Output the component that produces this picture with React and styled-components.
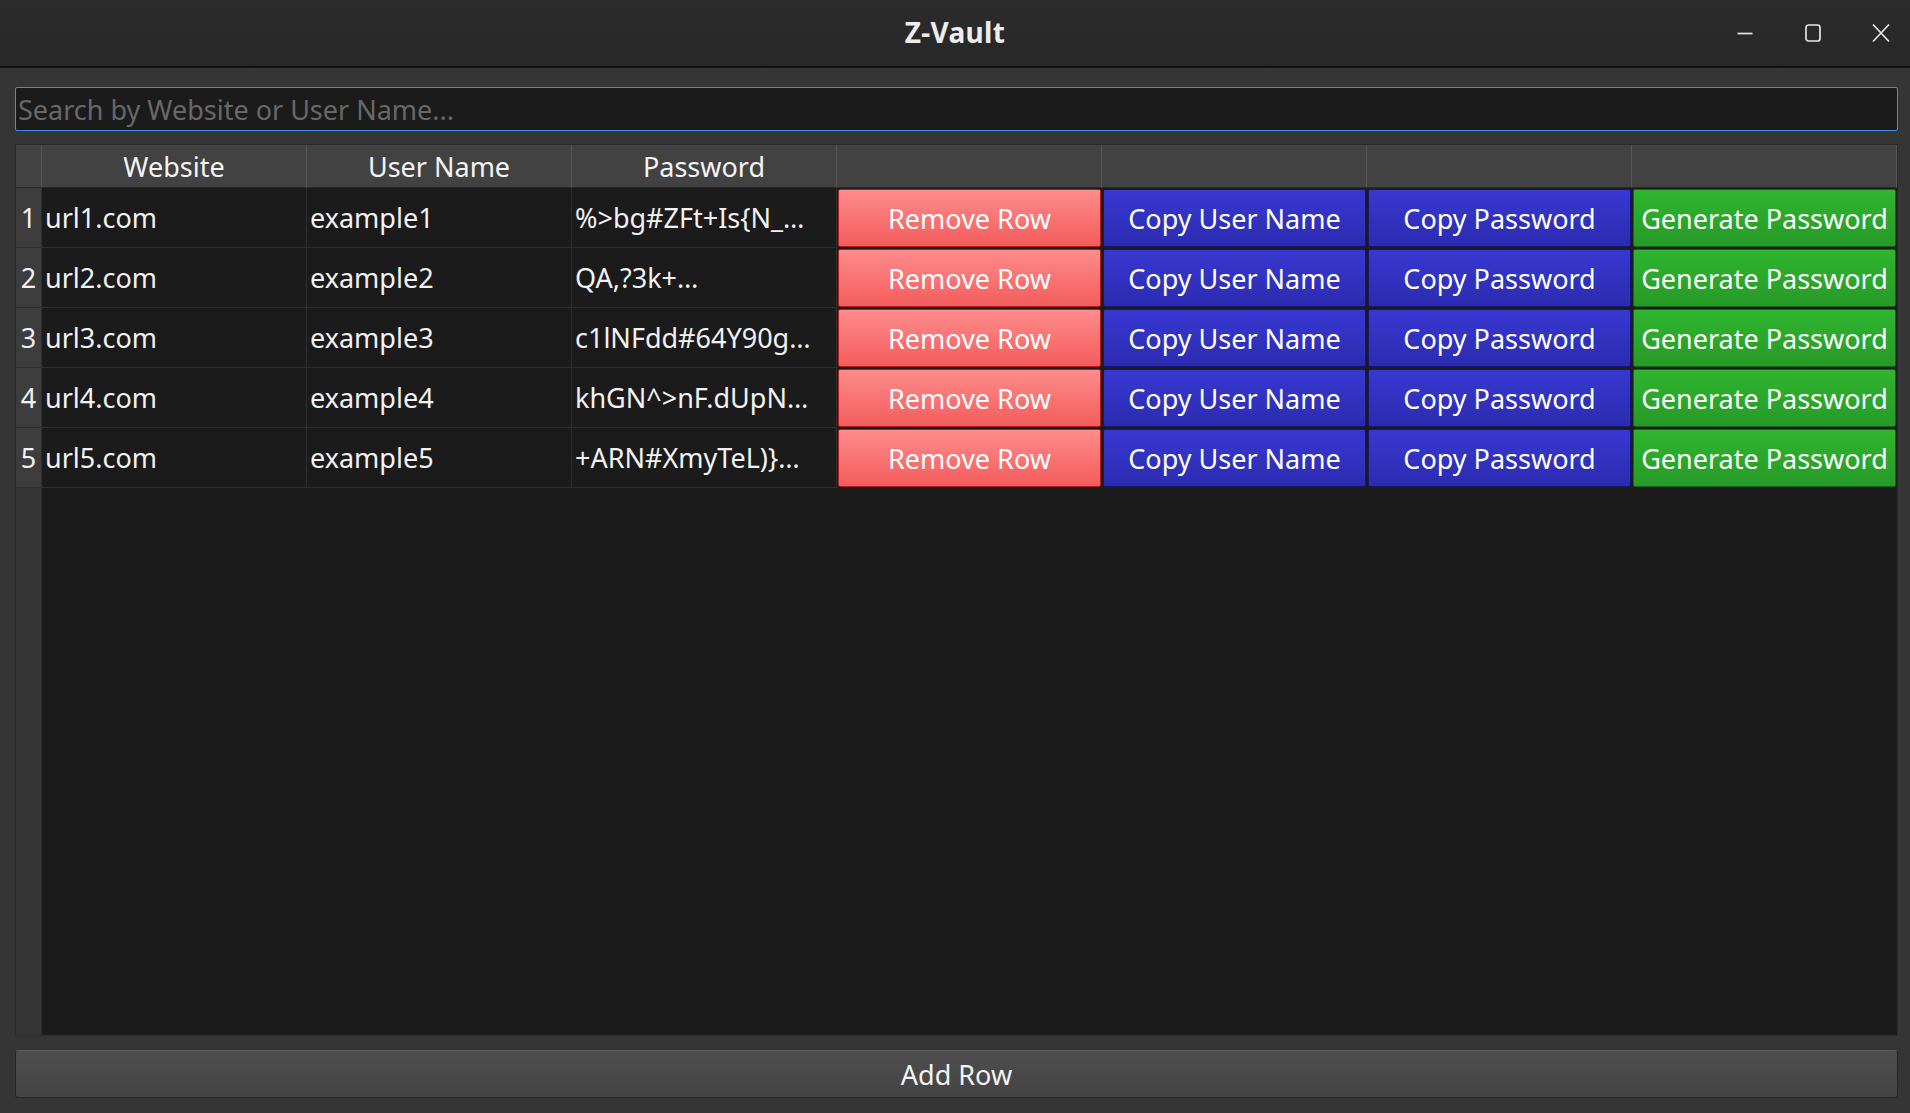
import React from 'react';
import styled, {createGlobalStyle} from 'styled-components';

const GlobalStyle = createGlobalStyle`
  html, body {
    margin: 0;
    padding: 0;
    background: #353535;
  }
  * {
    box-sizing: border-box;
  }
`

const Window = styled.div`
  width: 1910px;
  height: 1113px;
  display: flex;
  flex-direction: column;
  background: #353535;
  font-family: "Noto Sans", "Open Sans", sans-serif;
  color: #f2f2f2;
  overflow: hidden;
`
const TitleBar = styled.div`
  height: 68px;
  flex: none;
  display: grid;
  grid-template-columns: 1fr auto 1fr;
  align-items: center;
  background: linear-gradient(#2c2c2c, #272727);
  border-bottom: 2px solid #101010;
`
const Title = styled.div`
  grid-column: 2;
  font-size: 28px;
  font-weight: 700;
  color: #ededed;
  letter-spacing: 0.3px;
  padding-bottom: 2px;
`
const WinControls = styled.div`
  justify-self: end;
  display: flex;
  align-items: center;
  gap: 40px;
  padding-right: 15px;
`
const WinButton = styled.svg`
  width: 28px;
  height: 28px;
  stroke: #e6e6e6;
  stroke-width: 1.7;
  fill: none;
`
const Body = styled.div`
  flex: 1;
  display: flex;
  flex-direction: column;
  padding: 19px 12px 15px 15px;
  min-height: 0;
`
const Search = styled.input`
  height: 44px;
  flex: none;
  background: #1b1b1b;
  border: 1px solid #3d8fe0;
  border-radius: 2px;
  padding: 0 2px;
  font-family: inherit;
  font-size: 27px;
  color: #f2f2f2;
  outline: none;
  caret-color: #ffffff;
  &::placeholder {
    color: #686868;
  }
`
const Table = styled.div`
  flex: 1;
  margin-top: 13px;
  display: grid;
  grid-template-columns: 26px repeat(7, 1fr);
  grid-template-rows: 43px repeat(5, 60px) 1fr;
  background: #1b1b1b;
  border: 1px solid #2b2b2b;
  min-height: 0;
`
const HeadCell = styled.div`
  background: #424242;
  border-right: 1px solid #565656;
  border-bottom: 1px solid #2a2a2a;
  display: flex;
  align-items: center;
  justify-content: center;
  font-size: 27px;
  color: #f4f4f4;
  &:last-child {
    border-right: none;
  }
`
const RowNum = styled.div`
  background: #3d3d3d;
  border-bottom: 1px solid #2e2e2e;
  border-right: 1px solid #2e2e2e;
  display: flex;
  align-items: center;
  justify-content: center;
  font-size: 27px;
`
const Cell = styled.div`
  border-right: 1px solid #2e2e2e;
  border-bottom: 1px solid #2e2e2e;
  display: flex;
  align-items: center;
  padding-left: 3px;
  font-size: 27px;
  white-space: nowrap;
  overflow: hidden;
`
const ButtonCell = styled.div`
  padding: 1px;
  display: flex;
`
const palette = {
  red: {top: '#ff8c8c', bottom: '#f45c5c', border: '#b31e1e'},
  blue: {top: '#3838d2', bottom: '#2b2bb0', border: '#18186a'},
  green: {top: '#2fb52f', bottom: '#279a27', border: '#17641a'},
}
const ActionButton = styled.button`
  flex: 1;
  border: 1px solid ${p => palette[p.$tone].border};
  border-radius: 2px;
  background: linear-gradient(${p => palette[p.$tone].top}, ${p => palette[p.$tone].bottom});
  color: #ffffff;
  font-family: inherit;
  font-size: 27px;
  padding: 0;
  white-space: nowrap;
  overflow: hidden;
  cursor: pointer;
`
const Filler = styled.div`
  background: #353535;
  border-right: 1px solid #2e2e2e;
`
const AddButton = styled.button`
  flex: none;
  height: 48px;
  margin-top: 14px;
  border: 1px solid #262626;
  border-top-color: #5a5a5a;
  border-radius: 3px;
  background: linear-gradient(#4e4e4e, #444444);
  color: #f4f4f4;
  font-family: inherit;
  font-size: 27px;
`

const rows = [
  ['url1.com', 'example1', '%>bg#ZFt+Is{N_…'],
  ['url2.com', 'example2', 'QA,?3k+…'],
  ['url3.com', 'example3', 'c1lNFdd#64Y90g…'],
  ['url4.com', 'example4', 'khGN^>nF.dUpN…'],
  ['url5.com', 'example5', '+ARN#XmyTeL)}…'],
]

const App = () => {
  return (
    <Window>
      <GlobalStyle />
      <TitleBar>
        <Title>Z-Vault</Title>
        <WinControls>
          <WinButton viewBox="0 0 28 28"><path d="M6.5 14.5h15" /></WinButton>
          <WinButton viewBox="0 0 28 28"><rect x="7" y="6" width="14" height="16" rx="2.5" /></WinButton>
          <WinButton viewBox="0 0 28 28"><path d="M6 5.5l16 17M22 5.5l-16 17" /></WinButton>
        </WinControls>
      </TitleBar>
      <Body>
        <Search placeholder="Search by Website or User Name..." autoFocus />
        <Table>
          <HeadCell />
          <HeadCell>Website</HeadCell>
          <HeadCell>User Name</HeadCell>
          <HeadCell>Password</HeadCell>
          <HeadCell />
          <HeadCell />
          <HeadCell />
          <HeadCell />
          {rows.map((r, i) => (
            <React.Fragment key={i}>
              <RowNum>{i + 1}</RowNum>
              <Cell>{r[0]}</Cell>
              <Cell>{r[1]}</Cell>
              <Cell>{r[2]}</Cell>
              <ButtonCell><ActionButton $tone="red">Remove Row</ActionButton></ButtonCell>
              <ButtonCell><ActionButton $tone="blue">Copy User Name</ActionButton></ButtonCell>
              <ButtonCell><ActionButton $tone="blue">Copy Password</ActionButton></ButtonCell>
              <ButtonCell><ActionButton $tone="green">Generate Password</ActionButton></ButtonCell>
            </React.Fragment>
          ))}
          <Filler />
        </Table>
        <AddButton>Add Row</AddButton>
      </Body>
    </Window>
  );
}

export default App;
